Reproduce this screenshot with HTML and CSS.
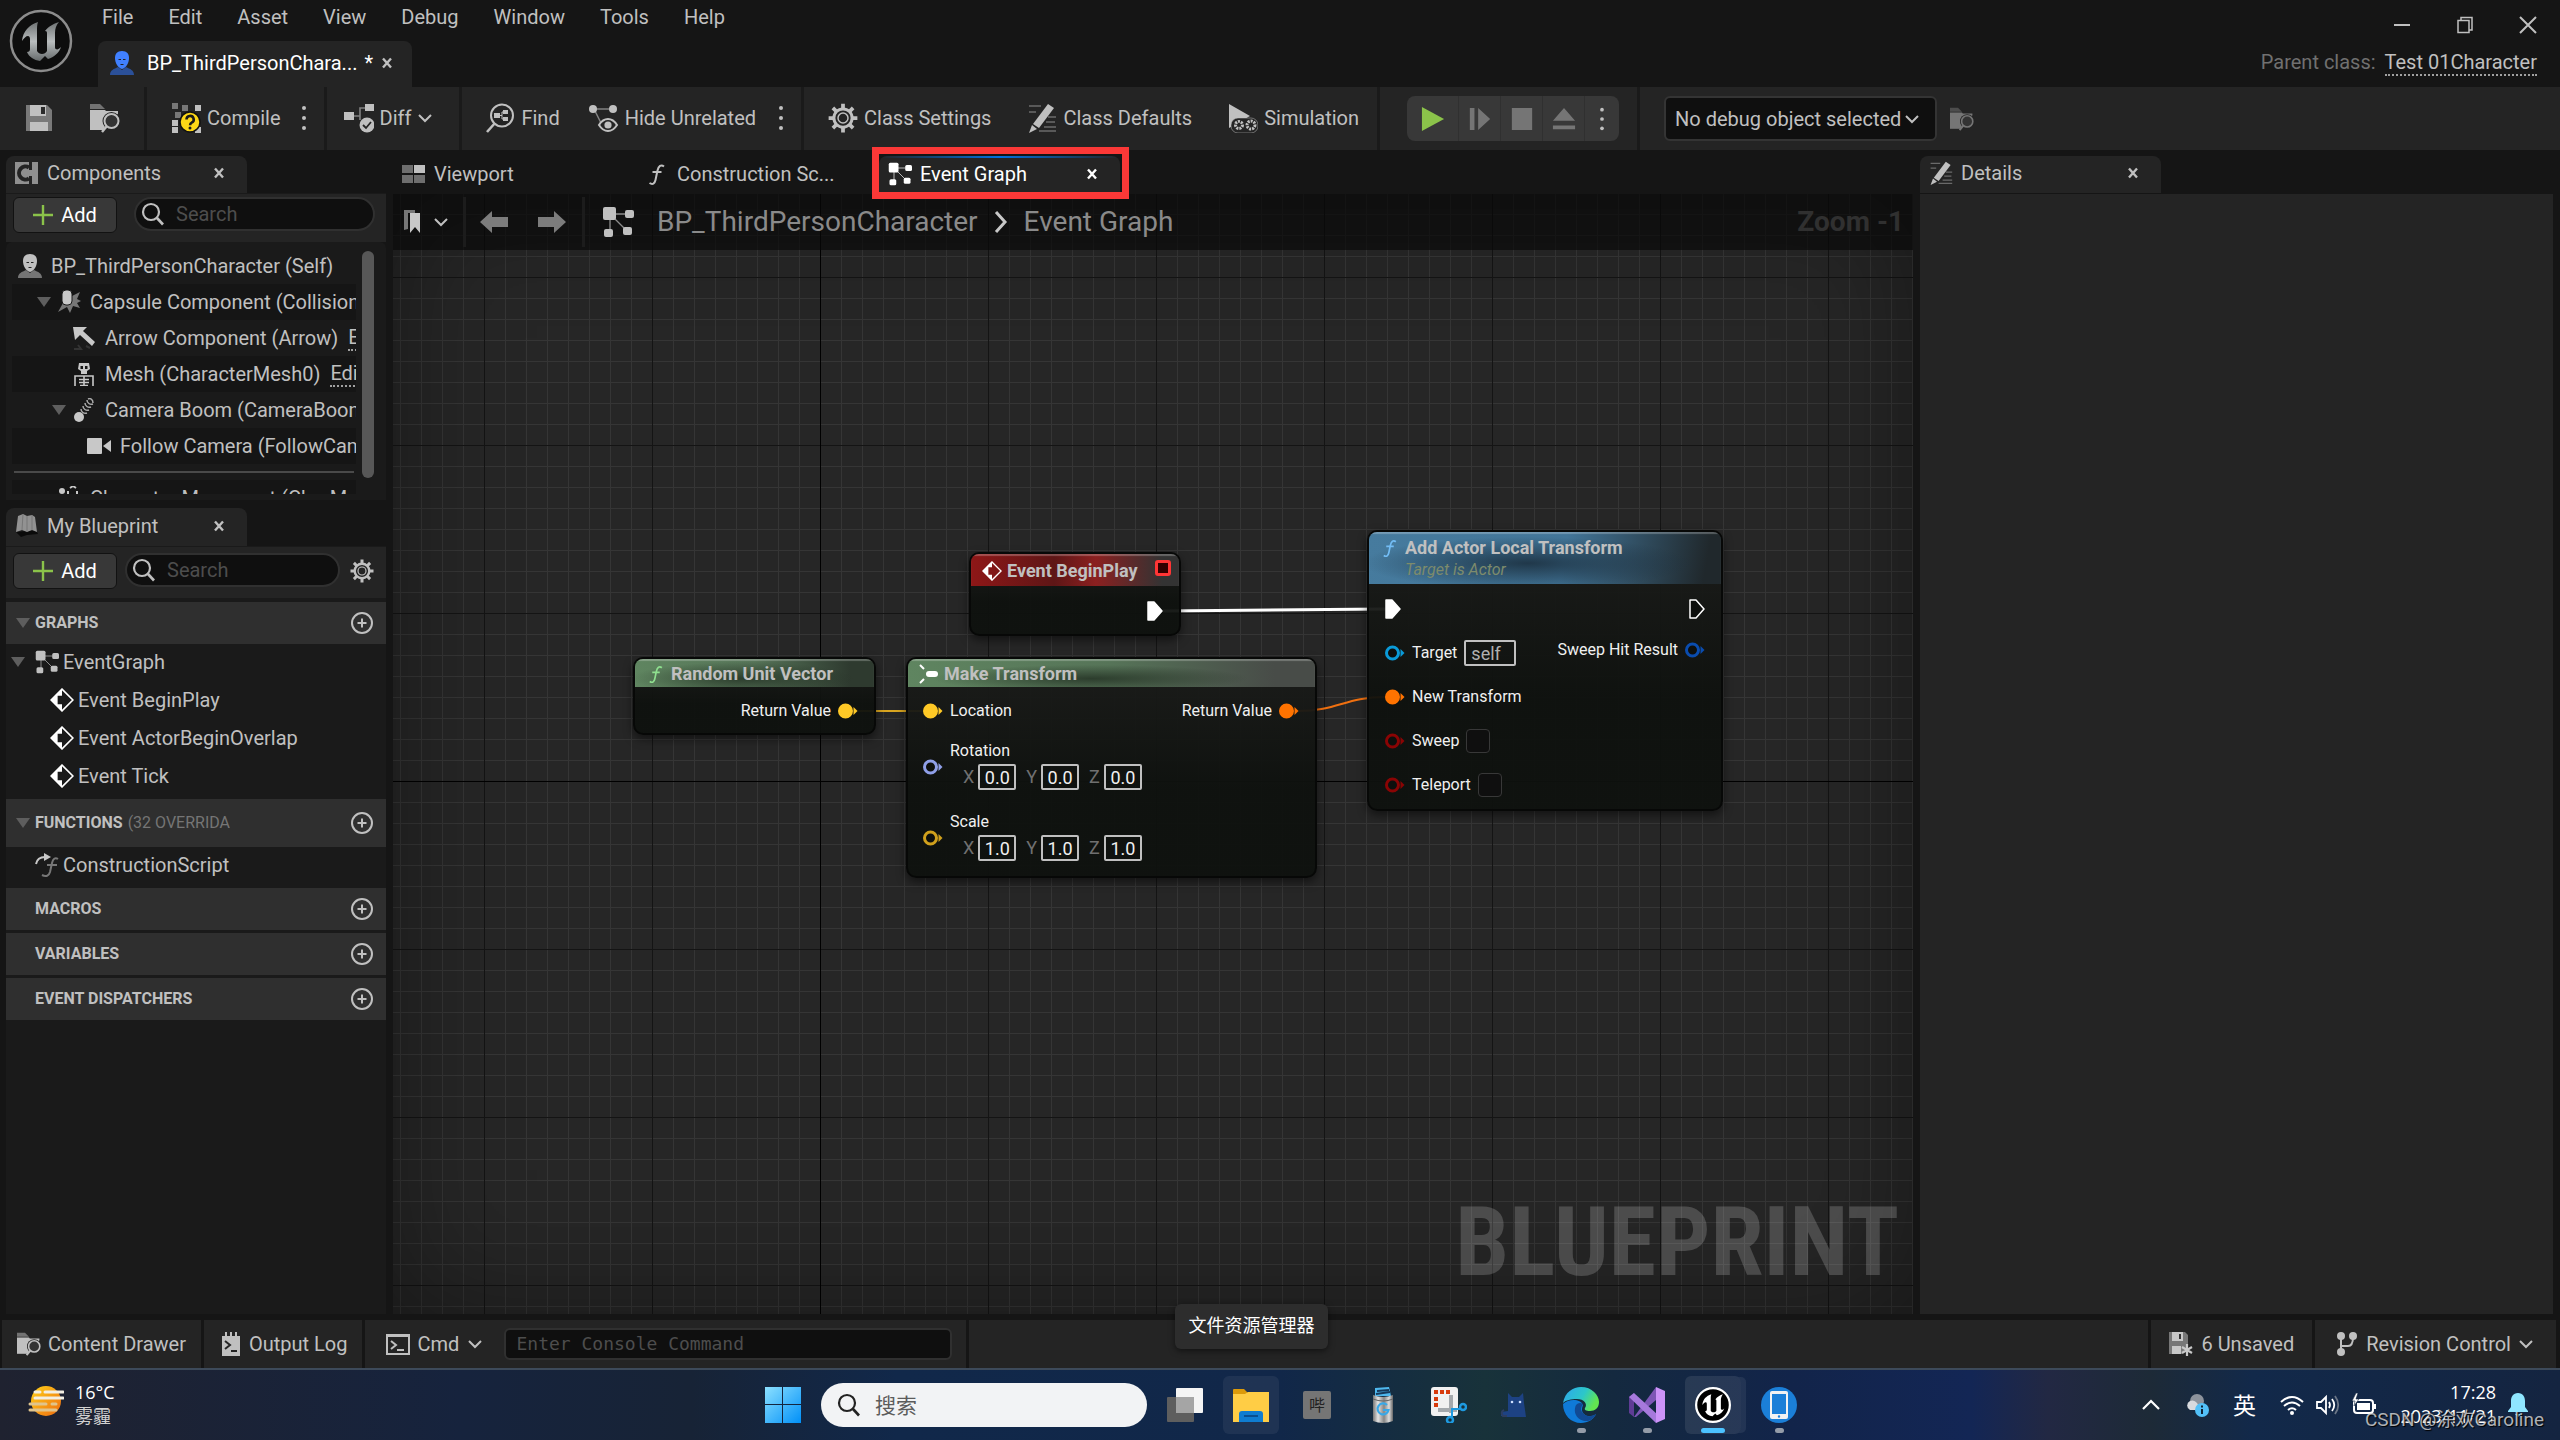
FILE: index.html
```html
<!DOCTYPE html>
<html lang="en">
<head>
  <meta charset="UTF-8">
  <meta name="viewport" content="width=device-width, initial-scale=1.0">
  <title>BP_ThirdPersonCharacter</title>
  <link rel="stylesheet" href="styles.css">
</head>
<body>

  <!-- icon sprite -->
  <svg class="sprite" xmlns="http://www.w3.org/2000/svg">
    <symbol id="i-close" viewBox="0 0 12 12"><path d="M2 1.5l8 9M10 1.5l-8 9" stroke="currentColor" stroke-width="2.4" fill="none"/></symbol>
    <symbol id="i-chevron" viewBox="0 0 16 16"><path d="M2 5l6 6 6-6" stroke="currentColor" stroke-width="2" fill="none"/></symbol>
    <symbol id="i-plus" viewBox="0 0 20 20"><path d="M10 0v20M0 10h20" stroke="currentColor" stroke-width="2.4"/></symbol>
    <symbol id="i-search" viewBox="0 0 24 24"><circle cx="10" cy="10" r="8" fill="none" stroke="currentColor" stroke-width="2.2"/><path d="M16 16l6 6.500" stroke="currentColor" stroke-width="2.6"/></symbol>
    <symbol id="i-add" viewBox="0 0 24 24"><circle cx="12" cy="12" r="10" fill="none" stroke="currentColor" stroke-width="2"/><path d="M12 7.500v9M7.500 12h9" stroke="currentColor" stroke-width="2"/></symbol>
    <symbol id="i-dots" viewBox="0 0 4 28"><circle cx="2" cy="4" r="2" fill="currentColor"/><circle cx="2" cy="14" r="2" fill="currentColor"/><circle cx="2" cy="24" r="2" fill="currentColor"/></symbol>
    <symbol id="i-tri" viewBox="0 0 16 10"><path d="M1 0h14L8 10z" fill="currentColor"/></symbol>
    <symbol id="i-gear" viewBox="0 0 24 24"><circle cx="12" cy="12" r="7.300" fill="none" stroke="currentColor" stroke-width="2.400"/><circle cx="12" cy="12" r="4" fill="none" stroke="currentColor" stroke-width="1.200"/><path d="M12 .5v4M12 19.500v4M.5 12h4M19.500 12h4M3.900 3.900l2.800 2.800M17.300 17.300l2.800 2.800M3.900 20.100l2.800-2.800M17.300 6.700l2.800-2.800" stroke="currentColor" stroke-width="3"/></symbol>
    <symbol id="i-save" viewBox="0 0 30 30"><path d="M2 2h21l5 5v21H2z" fill="currentColor" opacity=".55"/><path d="M6 2h16v11H6zM6 19h18v9H6z" fill="currentColor"/><path d="M17 4h4v7h-4z" fill="#2a2a2a"/></symbol>
    <symbol id="i-browse" viewBox="0 0 30 30"><path d="M0 1h10l5 5H0z" fill="currentColor" opacity=".5"/><path d="M0 7h15l1 1h12v19H0z" fill="currentColor"/><path d="M30 9v20H12l5-8z" fill="#242424"/><path d="M0 26h13" stroke="currentColor" stroke-width="2"/><circle cx="21.500" cy="18" r="9" fill="#242424"/><circle cx="21.500" cy="18" r="7" fill="#333" stroke="currentColor" stroke-width="2"/><path d="M17 23l-5 6" stroke="currentColor" stroke-width="2.400"/></symbol>
    <symbol id="i-compile" viewBox="0 0 30 30"><g fill="#c0c0c0"><path d="M1 17h6v6H1zM1 24h6v6H1zM24 2h6v6h-6zM24 24h6v6h-6z"/></g><path d="M1 0h6v6H1zM4 9h6v6H4zM11 2h6v6h-6z" fill="#777"/><circle cx="19" cy="19" r="10" fill="#fdd716" stroke="#111" stroke-width="1.500"/><path d="M15.500 16.500a3.600 3.600 0 1 1 5.200 3.200c-1.300.7-1.600 1.100-1.600 2.500" fill="none" stroke="#1a1a1a" stroke-width="2.600"/><circle cx="19" cy="25" r="1.500" fill="#1a1a1a"/></symbol>
    <symbol id="i-diff" viewBox="0 0 30 30"><path d="M0 9h10v8H0zM21 1h9v7h-9z" fill="currentColor"/><path d="M10 13h6V5h5M16 13v4" fill="none" stroke="currentColor" stroke-width="1.600" opacity=".6"/><circle cx="23" cy="22" r="7.500" fill="currentColor"/><path d="M19 22l3 3 5-6" fill="none" stroke="#242424" stroke-width="1.800"/></symbol>
    <symbol id="i-find" viewBox="0 0 30 30"><circle cx="17" cy="12.500" r="11" fill="none" stroke="currentColor" stroke-width="2"/><path d="M10 20l-8 9" stroke="currentColor" stroke-width="2.600"/><path d="M9 10h6v5H9zM18 7h5v4h-5zM18 14h5v4h-5z" fill="currentColor"/><path d="M15 12.500h2V9h2M17 12.500V16h2" fill="none" stroke="currentColor"/></symbol>
    <symbol id="i-hide" viewBox="0 0 30 30"><circle cx="4" cy="6" r="4" fill="currentColor"/><circle cx="24" cy="6" r="4" fill="currentColor"/><path d="M4 6h20M6 8l7 14" stroke="currentColor" stroke-width="1.500" opacity=".6"/><path d="M10 22c5-8 13-8 18 0-5 8-13 8-18 0z" fill="#242424" stroke="currentColor" stroke-width="2"/><circle cx="19" cy="22" r="3.600" fill="currentColor"/></symbol>
    <symbol id="i-pencil" viewBox="0 0 30 30"><path d="M2 3h12M2 9h7M21 14h8M19 19h9M17 24h12M12 28h17" stroke="currentColor" stroke-width="1.500" opacity=".45"/><path d="M21 1l6 4L12 25l-6-4z" fill="currentColor"/><path d="M5 22l5 4-8 4z" fill="currentColor"/></symbol>
    <symbol id="i-sim" viewBox="0 0 30 30"><path d="M1 1l21 12-21 12z" fill="currentColor"/><rect x="3" y="15" width="27" height="15" rx="7" fill="#242424" stroke="currentColor" stroke-opacity=".5"/><circle cx="11" cy="22" r="3.500" fill="none" stroke="currentColor" stroke-width="3" stroke-dasharray="2 1"/><circle cx="23" cy="22" r="4" fill="none" stroke="currentColor" stroke-width="3" stroke-dasharray="2 1"/></symbol>
    <symbol id="i-graph" viewBox="0 0 32 32"><path d="M8 8l18 18M8 8h18M8 8v20" fill="none" stroke="currentColor" stroke-width="1.300" opacity=".7"/><rect x="1" y="1" width="13" height="13" rx="2" fill="currentColor"/><rect x="23" y="4" width="9" height="8" rx="2" fill="currentColor"/><rect x="2" y="23" width="9" height="8" rx="2" fill="currentColor"/><rect x="21" y="21" width="9" height="8" rx="2" fill="currentColor"/></symbol>
    <symbol id="i-func" viewBox="0 0 24 24"><path d="M19 4.500c-3-2.500-5.500-.5-6.500 4L10.500 18c-.8 3.500-2.800 5-6 3M7.500 10h9" fill="none" stroke="currentColor" stroke-width="2"/></symbol>
    <symbol id="i-person" viewBox="0 0 24 24"><path d="M0 24c0-5 4-6 8-8l4 3 4-3c4 2 8 3 8 8z" fill="var(--coat, #757575)"/><path d="M12 0c5 0 7 3 7 7 0 5-3 10-7 11-4-1-7-6-7-11 0-4 2-7 7-7z" fill="var(--head, #c0c0c0)"/><path d="M8.500 8.500h2.500M13 8.500h2.500M10.500 13.500h3" stroke="#222" stroke-width="1"/></symbol>
    <symbol id="i-event" viewBox="0 0 22 22"><path d="M11 1l10 10-10 10L1 11z" fill="none" stroke="#fff" stroke-width="1.500"/><path d="M11 1v6H7v8h4v6L1 11z" fill="#fff"/></symbol>
    <symbol id="i-exec" viewBox="0 0 16 20"><path d="M1 1h6l8 9-8 9H1z" fill="var(--fill, #fff)" stroke="#fff" stroke-width="1.500" stroke-linejoin="round"/></symbol>
    <symbol id="i-pin" viewBox="0 0 20 16"><circle cx="7.500" cy="8" r="6" fill="var(--fill, currentColor)" stroke="currentColor" stroke-width="3"/><path d="M15.500 4l4 4-4 4z" fill="currentColor"/></symbol>
    <symbol id="i-term" viewBox="0 0 24 24"><path d="M1 3h22v19H1z" fill="none" stroke="currentColor" stroke-width="2"/><path d="M1 2h22v3H1z" fill="currentColor"/><path d="M5 9l5 4-5 4M11 18h7" fill="none" stroke="currentColor" stroke-width="2"/></symbol>
    <symbol id="i-ulogo" viewBox="0 0 64 64"><path d="M29 13C20 16 14 22 13 32c2-3 4-5 6-5 1 0 2 1 2 3v10c0 2-1 3-3 3 2 5 7 8 13 9l5-5 3 3c6-2 11-6 13-12-2 2-4 3-5 2-1 0-1-1-1-3V24c0-4 1-8 4-11-6 2-10 4-14 9 2 0 2 1 2 3v17c-1 2-3 3-5 3s-4-1-5-3V22c0-4 0-6 1-9z" fill="var(--logo, #fff)"/></symbol>
  </svg>

  <header class="titlebar">
    <svg class="logo" viewBox="0 0 64 64">
      <defs><linearGradient id="metal" x1="0" y1="0" x2="0" y2="1"><stop offset="0" stop-color="#6e7273"/><stop offset=".5" stop-color="#b9bdbe"/><stop offset="1" stop-color="#666b6c"/></linearGradient></defs>
      <circle cx="32" cy="32" r="30" fill="#0d0d0d" stroke="#8c8c8c" stroke-width="2.500"/>
      <use href="#i-ulogo"/>
    </svg>
    <div class="title-main">
      <nav class="menu">
        <button>File</button><button>Edit</button><button>Asset</button><button>View</button><button>Debug</button><button>Window</button><button>Tools</button><button>Help</button>
      </nav>
      <div class="asset-tab">
        <svg class="icon-24 blue-person"><use href="#i-person"/></svg>
        <span class="asset-name">BP_ThirdPersonChara...</span>
        <span>*</span>
        <button class="close" aria-label="Close"><svg><use href="#i-close"/></svg></button>
      </div>
    </div>
    <div class="title-right">
      <div class="window-buttons">
        <button aria-label="Minimize"><svg viewBox="0 0 18 18"><path d="M1 9h16" stroke="currentColor" stroke-width="2"/></svg></button>
        <button aria-label="Restore"><svg viewBox="0 0 18 18"><path d="M5 4V1.500h11V14h-2.500M2 4.500h11v12H2z" fill="none" stroke="currentColor" stroke-width="1.500"/></svg></button>
        <button aria-label="Close window"><svg viewBox="0 0 18 18"><path d="M1 1l16 16M17 1L1 17" stroke="currentColor" stroke-width="2"/></svg></button>
      </div>
      <div class="parent-class">Parent class: <a href="#">Test 01Character</a></div>
    </div>
  </header>

  <div class="toolbar">
    <div class="tool-group files">
      <button class="tool" aria-label="Save"><svg><use href="#i-save"/></svg></button>
      <button class="tool" aria-label="Browse"><svg><use href="#i-browse"/></svg></button>
    </div>
    <div class="tool-group compile">
      <button class="tool"><svg><use href="#i-compile"/></svg>Compile</button>
      <button class="dots" aria-label="Compile options"><svg><use href="#i-dots"/></svg></button>
    </div>
    <div class="tool-group diff">
      <button class="tool"><svg><use href="#i-diff"/></svg>Diff<svg class="icon-16"><use href="#i-chevron"/></svg></button>
    </div>
    <div class="tool-group find">
      <button class="tool"><svg><use href="#i-find"/></svg>Find</button>
      <button class="tool"><svg><use href="#i-hide"/></svg>Hide Unrelated</button>
      <button class="dots" aria-label="Hide options"><svg><use href="#i-dots"/></svg></button>
    </div>
    <div class="tool-group class-tools">
      <button class="tool"><svg><use href="#i-gear"/></svg>Class Settings</button>
      <button class="tool"><svg><use href="#i-pencil"/></svg>Class Defaults</button>
      <button class="tool"><svg><use href="#i-sim"/></svg>Simulation</button>
    </div>
    <div class="tool-group play-tools">
      <div class="play-bar">
        <button class="play" aria-label="Play"><svg viewBox="0 0 26 26"><path d="M1 0l24 13L1 26z" fill="currentColor"/></svg></button>
        <button aria-label="Step"><svg viewBox="0 0 26 26"><path d="M2 1h5v24H2zM11 1l13 12-13 12z" fill="currentColor"/></svg></button>
        <button aria-label="Stop"><svg viewBox="0 0 26 26"><path d="M2 1h22v24H2z" fill="currentColor"/></svg></button>
        <button aria-label="Eject"><svg viewBox="0 0 26 26"><path d="M13 1l12 14H1zM1 20h24v4H1z" fill="currentColor"/></svg></button>
        <button class="more" aria-label="Play options"><svg><use href="#i-dots"/></svg></button>
      </div>
    </div>
    <div class="tool-group debug">
      <div class="select-wrap debug-select">
        <select aria-label="Debug object"><option>No debug object selected</option></select>
        <svg class="icon-16"><use href="#i-chevron"/></svg>
      </div>
      <button class="small-browse" aria-label="Browse debug object"><svg><use href="#i-browse"/></svg></button>
    </div>
  </div>

  <main class="workspace">
    <aside class="side">
      <section class="dock components">
        <div class="tabs">
          <div class="tab active">
            <svg class="icon-24" viewBox="0 0 24 24"><path d="M0 1h14v22H0zM17 1h6v22h-6zM14 9h3v6h-3z" fill="#909090"/><path d="M14 6.500a6.500 6.500 0 1 0 0 11" fill="none" stroke="#242424" stroke-width="4"/></svg>
            <span>Components</span>
            <button class="close" aria-label="Close Components"><svg><use href="#i-close"/></svg></button>
          </div>
        </div>
        <div class="panel-tools">
          <button class="add"><svg><use href="#i-plus"/></svg>Add</button>
          <label class="search"><svg><use href="#i-search"/></svg><input type="text" placeholder="Search" aria-label="Search components"></label>
        </div>
        <div class="tree-wrap">
          <ul class="tree">
            <li class="d0"><svg class="icon-24"><use href="#i-person"/></svg><span>BP_ThirdPersonCharacter (Self)</span></li>
            <li class="d1"><svg class="tri"><use href="#i-tri"/></svg><svg class="icon-24" viewBox="0 0 24 24"><path d="M15 6l8-4-3 7 4 2-4 2 3 5-7-2-3 7-3-6-9 5 5-9z" fill="#777"/><rect x="5" y="0" width="10" height="15" rx="4" fill="#c8c8c8" stroke="#1a1a1a"/></svg><span>Capsule Component (CollisionCylinder)</span></li>
            <li class="d2"><svg class="icon-24" viewBox="0 0 24 24"><path d="M2 23h7l-3-4M14 20l4 2" stroke="#333" stroke-width="2" fill="none"/><path d="M1 1h14l-4 4 12 11-3 4L8 9l-5 5z" fill="#c8c8c8"/></svg><span>Arrow Component (Arrow)</span><a href="#">Edit in C++</a></li>
            <li class="d2"><svg class="icon-24" viewBox="0 0 24 24"><path d="M7 1h10l1 6-3 2v3H9V9L6 7z" fill="#c8c8c8"/><path d="M8.500 4h2.500v3H8.500zM13 4h2.500v3H13z" fill="#151515"/><path d="M3 24V14h18v10M12 14v10M7 17.500h10M7 20.500h10M8 23.500h8" stroke="#c8c8c8" stroke-width="1.600" fill="none"/></svg><span>Mesh (CharacterMesh0)</span><a href="#">Edit in C++</a></li>
            <li class="d2 open"><svg class="tri"><use href="#i-tri"/></svg><svg class="icon-24" viewBox="0 0 24 24"><circle cx="7" cy="19" r="5" fill="#c8c8c8"/><path d="M9 11c0 3 3 5 6 4M11 8c0 3 3 5 6 4M13 5c0 3 3 5 6 4M15 2c0 3 3 5 6 4M16 1c2-1 5 0 5 4" stroke="#aaa" stroke-width="1.500" fill="none"/></svg><span>Camera Boom (CameraBoom)</span></li>
            <li class="d3"><svg class="icon-24" viewBox="0 0 24 24"><rect x="0" y="4" width="15" height="16" rx="1" fill="#c8c8c8"/><path d="M24 6v12l-8-6z" fill="#c8c8c8"/></svg><span>Follow Camera (FollowCamera)</span></li>
            <li class="rule"></li>
            <li class="d1 last"><svg class="icon-24" viewBox="0 0 24 24"><circle cx="5" cy="5" r="3" fill="#c8c8c8"/><path d="M13 2l3-2 3 2M11 5v4M20 5v4" stroke="#c8c8c8" stroke-width="2" fill="none"/></svg><span>Character Movement (CharMoveComp)</span></li>
          </ul>
          <div class="scrollbar"></div>
        </div>
      </section>

      <section class="dock blueprint">
        <div class="tabs">
          <div class="tab active">
            <svg class="icon-24" viewBox="0 0 24 24"><path d="M1 18l5 5 6-2 11-1-2-4z" fill="#0a0a0a"/><path d="M3 2l5-2 4 2 5-1 3 2 2 15-5-2-5 2-5-2-6 2z" fill="#929292"/><path d="M8 0L7 16M12 2v16M17 1l0 15" stroke="#777"/></svg>
            <span>My Blueprint</span>
            <button class="close" aria-label="Close My Blueprint"><svg><use href="#i-close"/></svg></button>
          </div>
        </div>
        <div class="panel-tools">
          <button class="add"><svg><use href="#i-plus"/></svg>Add</button>
          <label class="search"><svg><use href="#i-search"/></svg><input type="text" placeholder="Search" aria-label="Search blueprint"></label>
          <button class="gear" aria-label="View options"><svg class="icon-24"><use href="#i-gear"/></svg></button>
        </div>
        <div class="sections">
          <div class="section-head"><svg class="tri"><use href="#i-tri"/></svg><b>GRAPHS</b><button aria-label="Add graph"><svg class="icon-24"><use href="#i-add"/></svg></button></div>
          <ul class="items events">
            <li class="top"><svg class="tri"><use href="#i-tri"/></svg><svg class="icon-24"><use href="#i-graph"/></svg>EventGraph</li>
            <li><svg class="icon-24"><use href="#i-event"/></svg>Event BeginPlay</li>
            <li><svg class="icon-24"><use href="#i-event"/></svg>Event ActorBeginOverlap</li>
            <li><svg class="icon-24"><use href="#i-event"/></svg>Event Tick</li>
          </ul>
          <div class="section-head tall"><svg class="tri"><use href="#i-tri"/></svg><b>FUNCTIONS</b><span class="count">(32 OVERRIDABLE)</span><button aria-label="Add function"><svg class="icon-24"><use href="#i-add"/></svg></button></div>
          <ul class="items">
            <li class="func"><svg class="icon-24" viewBox="0 0 24 24"><path d="M1 11c1-5 5-7 9-7" stroke="#c8c8c8" stroke-width="2" fill="none"/><path d="M9 0l7 4-7 4z" fill="#c8c8c8"/><path d="M23 6c-3-2-5 0-6 4l-2 9c-1 4-4 5-8 3M12 12h10" fill="none" stroke="#777" stroke-width="2"/></svg>ConstructionScript</li>
          </ul>
          <div class="section-head"><b>MACROS</b><button aria-label="Add macro"><svg class="icon-24"><use href="#i-add"/></svg></button></div>
          <div class="section-head"><b>VARIABLES</b><button aria-label="Add variable"><svg class="icon-24"><use href="#i-add"/></svg></button></div>
          <div class="section-head"><b>EVENT DISPATCHERS</b><button aria-label="Add dispatcher"><svg class="icon-24"><use href="#i-add"/></svg></button></div>
        </div>
      </section>
    </aside>

    <section class="dock center">
      <div class="tabs">
        <div class="tab"><svg class="icon-24" viewBox="0 0 24 24"><path d="M0 3h11v8H0zM0 13h11v8H0zM12 13h11v8H12z" fill="#6e6e6e"/><path d="M12 3h11v8H12z" fill="#c0c0c0"/></svg><span>Viewport</span></div>
        <div class="tab"><svg class="icon-24"><use href="#i-func"/></svg><span>Construction Sc...</span></div>
        <div class="tab active current"><svg class="icon-24"><use href="#i-graph"/></svg><span>Event Graph</span><button class="close" aria-label="Close Event Graph"><svg><use href="#i-close"/></svg></button></div>
      </div>
      <div class="graph">
        <div class="graph-head">
          <button class="bookmark" aria-label="Bookmarks"><svg class="icon-24" viewBox="0 0 24 24"><path d="M3 0h11v3H7v16l-4 1z" fill="#777"/><path d="M9 3h10v20l-5-6-5 6z" fill="#c8c8c8"/></svg><svg class="icon-16"><use href="#i-chevron"/></svg></button>
          <div class="nav-buttons">
            <button aria-label="Back"><svg viewBox="0 0 28 24"><path d="M0 12L12 1v6h16v10H12v6z" fill="#7c7c7c"/></svg></button>
            <button aria-label="Forward"><svg viewBox="0 0 28 24"><path d="M28 12L16 1v6H0v10h16v6z" fill="#7c7c7c"/></svg></button>
          </div>
          <svg class="crumb-icon"><use href="#i-graph"/></svg>
          <div class="crumbs"><span>BP_ThirdPersonCharacter</span><svg viewBox="0 0 14 24"><path d="M2 2l9 10-9 10" fill="none" stroke="#c8c8c8" stroke-width="3"/></svg><span>Event Graph</span></div>
          <div class="zoom">Zoom -1</div>
        </div>

        <svg class="wires">
          <path d="M770 417L992 415" stroke="#fff" stroke-width="3"/>
          <path d="M464 517H530" stroke="#d9a520" stroke-width="2"/>
          <path d="M905 517C945 517 952 503 992 503" stroke="#f07010" stroke-width="2"/>
        </svg>

        <div class="node begin-play">
          <div class="node-head red"><svg class="node-icon"><use href="#i-event"/></svg><b>Event BeginPlay</b><i class="delegate"></i></div>
          <div class="node-body"><div class="pins out"><div class="pin"><svg class="exec"><use href="#i-exec"/></svg></div></div></div>
        </div>

        <div class="node random">
          <div class="node-head green"><svg class="node-icon"><use href="#i-func"/></svg><b>Random Unit Vector</b></div>
          <div class="node-body"><div class="pins out"><div class="pin">Return Value<svg class="dot yellow"><use href="#i-pin"/></svg></div></div></div>
        </div>

        <div class="node make">
          <div class="node-head green wide"><svg class="node-icon" viewBox="0 0 20 20"><path d="M1 1l4 4M1 19l4-4" stroke="#fff" stroke-width="2"/><rect x="7" y="7" width="12" height="6" rx="3" fill="#fff"/></svg><b>Make Transform</b></div>
          <div class="node-body">
            <div class="pins">
              <div class="pin"><svg class="dot yellow"><use href="#i-pin"/></svg>Location</div>
              <div class="pin vector"><svg class="dot hollow lilac"><use href="#i-pin"/></svg>
                <div>Rotation
                  <div class="xyz"><label>X<input value="0.0"></label><label>Y<input value="0.0"></label><label>Z<input value="0.0"></label></div>
                </div>
              </div>
              <div class="pin vector"><svg class="dot hollow gold"><use href="#i-pin"/></svg>
                <div>Scale
                  <div class="xyz"><label>X<input value="1.0"></label><label>Y<input value="1.0"></label><label>Z<input value="1.0"></label></div>
                </div>
              </div>
            </div>
            <div class="pins out"><div class="pin">Return Value<svg class="dot orange"><use href="#i-pin"/></svg></div></div>
          </div>
        </div>

        <div class="node add-transform">
          <div class="node-head blue"><svg class="node-icon"><use href="#i-func"/></svg><div><b>Add Actor Local Transform</b><em>Target is Actor</em></div></div>
          <div class="node-body">
            <div class="pins">
              <div class="pin"><svg class="exec"><use href="#i-exec"/></svg></div>
              <div class="pin"><svg class="dot hollow cyan"><use href="#i-pin"/></svg><label for="target">Target</label><input id="target" class="self" value="self"></div>
              <div class="pin"><svg class="dot orange"><use href="#i-pin"/></svg>New Transform</div>
              <div class="pin"><svg class="dot hollow maroon"><use href="#i-pin"/></svg><label for="sweep">Sweep</label><input id="sweep" type="checkbox"></div>
              <div class="pin"><svg class="dot hollow maroon"><use href="#i-pin"/></svg><label for="teleport">Teleport</label><input id="teleport" type="checkbox"></div>
            </div>
            <div class="pins out">
              <div class="pin"><svg class="exec hollow"><use href="#i-exec"/></svg></div>
              <div class="pin">Sweep Hit Result<svg class="dot hollow navy"><use href="#i-pin"/></svg></div>
            </div>
          </div>
        </div>

        <div class="stamp">BLUEPRINT</div>
      </div>
    </section>

    <section class="dock details">
      <div class="tabs">
        <div class="tab active"><svg class="icon-24"><use href="#i-pencil"/></svg><span>Details</span><button class="close" aria-label="Close Details"><svg><use href="#i-close"/></svg></button></div>
      </div>
      <div class="details-body"></div>
    </section>
  </main>

  <footer class="statusbar">
    <button class="cell"><svg class="icon-24"><use href="#i-browse"/></svg>Content Drawer</button>
    <button class="cell output"><svg class="icon-24" viewBox="0 0 24 24"><path d="M3 4h3V0h2v4h3V0h2v4h3V0h2v4h3v20H3z" fill="#c0c0c0"/><path d="M6 9l5 4-5 4M12 19h6" fill="none" stroke="#242424" stroke-width="2"/></svg>Output Log</button>
    <div class="cell cmd">
      <svg class="icon-24"><use href="#i-term"/></svg>
      <div class="select-wrap cmd-select"><select aria-label="Console type"><option>Cmd</option></select><svg class="icon-16"><use href="#i-chevron"/></svg></div>
      <input class="console" type="text" placeholder="Enter Console Command" aria-label="Console command">
    </div>
    <div class="cell filler"></div>
    <button class="cell unsaved"><svg class="icon-24" viewBox="0 0 24 24"><path d="M0 0h16l3 3v10l-6 9H0z" fill="#777"/><path d="M3 0h11v9H3zM3 14h9v8H3z" fill="#c8c8c8"/><path d="M10 2h2v5h-2z" fill="#333"/><path d="M18 12v12M13 15l10 6M23 15l-10 6" stroke="#c8c8c8" stroke-width="2.200"/></svg>6 Unsaved</button>
    <button class="cell revision"><svg class="icon-24" viewBox="0 0 24 24"><path d="M6 4v16M6 14h7c4 0 5-3 5-9" fill="none" stroke="#c0c0c0" stroke-width="2"/><circle cx="6" cy="4" r="4" fill="#c0c0c0"/><circle cx="18" cy="4" r="4" fill="#c0c0c0"/><circle cx="6" cy="20" r="4" fill="#c0c0c0"/></svg>Revision Control<svg class="icon-16"><use href="#i-chevron"/></svg></button>
  </footer>

  <!-- Windows taskbar -->
  <div class="taskbar">
    <div class="weather">
      <svg viewBox="0 0 36 36"><defs><linearGradient id="sun" x1="0" y1="0" x2="1" y2="1"><stop offset="0" stop-color="#ffd21a"/><stop offset="1" stop-color="#ee6a10"/></linearGradient></defs><circle cx="18" cy="17" r="15" fill="url(#sun)"/><path d="M7 8h5M17 8h18M7 14h28" stroke="#f3eee2" stroke-width="3" stroke-linecap="round"/><path d="M2 20h16M24 20h4M2 26h26" stroke="#e0c48c" stroke-width="3" stroke-linecap="round"/></svg>
      <div>16°C<br><span>雾霾</span></div>
    </div>
    <div class="apps">
      <button class="app" aria-label="Start"><svg viewBox="0 0 36 36"><defs><linearGradient id="win" x1="0" y1="0" x2="1" y2="1"><stop offset="0" stop-color="#8ce0ff"/><stop offset="1" stop-color="#0090f8"/></linearGradient></defs><path d="M0 0h17v17H0zM18 0h18v17H18zM0 18h17v18H0zM18 18h18v18H18z" fill="url(#win)"/></svg></button>
      <label class="win-search"><svg class="icon-24"><use href="#i-search"/></svg><input type="text" placeholder="搜索" aria-label="搜索"></label>
      <button class="app" aria-label="Task view"><svg viewBox="0 0 36 36"><rect x="9" y="1" width="27" height="25" rx="1" fill="#f4f4f4"/><rect x="0" y="10" width="27" height="25" rx="1" fill="#5e5e5e"/><path d="M9 10h18v16H9z" fill="#a5a5a5"/></svg></button>
      <button class="app hot" aria-label="文件资源管理器"><svg viewBox="0 0 36 36"><path d="M0 3q0-1 1-1h10l4 4v5H0z" fill="#dc9a0a"/><path d="M0 7h12l3-2h21v30H0z" fill="#ffcd45"/><path d="M6 35V27q0-3 3-3h18q3 0 3 3v8z" fill="#0f7cd0"/><path d="M11 29h14" stroke="#0a4f90" stroke-width="2"/></svg></button>
      <button class="app" aria-label="哔"><span class="bi">哔</span></button>
      <button class="app" aria-label="Recycle bin"><svg viewBox="0 0 36 36"><defs><linearGradient id="can" x1="0" x2="1" y1="0" y2="0"><stop offset="0" stop-color="#777"/><stop offset=".25" stop-color="#e4e4e4"/><stop offset=".55" stop-color="#858585"/><stop offset=".8" stop-color="#dedede"/><stop offset="1" stop-color="#666"/></linearGradient></defs><path d="M10 1l14-1 2 9H10z" fill="#4fb8ee"/><path d="M12 4l12-1M11 7l14-2" stroke="#173a5c" stroke-width="2"/><path d="M8 8q10 4 20 0v26q-10 4-20 0z" fill="url(#can)"/><path d="M8 12q10 4 20 0" stroke="#666" fill="none"/><path d="M22 18a5.500 5.500 0 1 0 1.500 5H18" fill="none" stroke="#38a8e8" stroke-width="2.200"/></svg></button>
      <button class="app" aria-label="Snipping tool"><svg viewBox="0 0 36 36"><rect x="0" y="0" width="27" height="29" rx="3" fill="#f1f1f1"/><path d="M3 5h16M5 10v12" stroke="#d83b0c" stroke-width="4" stroke-dasharray="4 2" fill="none"/><path d="M20 8v18M7 23h19" stroke="#a4a9ad" stroke-width="4"/><circle cx="32" cy="20" r="3" fill="none" stroke="#1e9ae0" stroke-width="2.500"/><circle cx="19" cy="33" r="3" fill="none" stroke="#1e9ae0" stroke-width="2.500"/><path d="M21 30V22h9" stroke="#1e9ae0" stroke-width="2" fill="none"/></svg></button>
      <button class="app" aria-label="Cat"><svg viewBox="0 0 36 36"><path d="M11 6l4 4h7l4-4 1 10 2 14H10l-6-1v-4l7-1z" fill="#1d4283"/><path d="M10 29H6q-3-4 1-6" stroke="#2c3d60" stroke-width="2" fill="none"/><circle cx="15" cy="15" r="1.300" fill="#cfe0ff"/><circle cx="23" cy="15" r="1.300" fill="#cfe0ff"/></svg></button>
      <button class="app running" aria-label="Edge"><svg viewBox="0 0 36 36"><defs><linearGradient id="edge1" x1="0" x2="1" y1="0" y2=".4"><stop offset="0" stop-color="#2ea5ee"/><stop offset=".6" stop-color="#2cc7c9"/><stop offset="1" stop-color="#62e650"/></linearGradient></defs><path d="M0 17c0 11 8 19 18 19 7 0 13-4 15-9-4 3-9 3-12 0-3-3-2-6-1-9-2-6-14-7-20-1z" fill="#0f7ad8"/><path d="M0 16C2 5 10 0 18 0c11 0 18 8 18 15 0 6-4 9-9 9-4 0-6-1-5-3 3-4-1-9-8-9-6 0-11 1-14 4z" fill="url(#edge1)"/><path d="M13 18c-4 9 3 17 12 16 4-1 7-4 8-7-5 3-10 3-13-1-3-3-2-6 0-9-3-2-5-1-7 1z" fill="#114a94"/></svg></button>
      <button class="app running" aria-label="Visual Studio"><svg viewBox="0 0 36 36"><path d="M5 30L27 0v13L7 30z" fill="#7d56b5"/><path d="M0 10l5-4v24l-5-4z" fill="#5f3c95"/><path d="M0 10l5-4 24 22-2 8z" fill="#a679dc"/><path d="M27 0l9 4v28l-9 4z" fill="#cc93f8"/></svg></button>
      <button class="app running focused" aria-label="Unreal Editor"><svg viewBox="0 0 64 64"><circle cx="32" cy="32" r="30" fill="#000" stroke="#fff" stroke-width="4"/><use href="#i-ulogo"/></svg></button>
      <button class="app running" aria-label="Phone link"><svg viewBox="0 0 36 36"><circle cx="18" cy="18" r="18" fill="#1b7fd8"/><rect x="9" y="4" width="18" height="28" rx="2" fill="#f2f2f2"/><path d="M11 7h14v20H11z" fill="#1b7fd8"/><circle cx="18" cy="29.500" r="1.200" fill="#1b7fd8"/></svg></button>
    </div>
    <div class="tray">
      <svg class="icon-24" viewBox="0 0 24 24"><path d="M4 16l8-8 8 8" fill="none" stroke="#fff" stroke-width="2.200"/></svg>
      <svg class="icon-24 cloud" viewBox="0 0 24 24"><circle cx="12" cy="8" r="7" fill="#8d939c"/><path d="M5 8a6 6 0 0 1 7 2l4 7H5a5 5 0 0 1 0-9z" fill="#d8dade"/><circle cx="17" cy="17" r="7" fill="#52c0f8"/><path d="M17 16v5M17 12.500v2" stroke="#123" stroke-width="2"/></svg>
      <span class="ime">英</span>
      <svg class="icon-24" viewBox="0 0 24 24"><path d="M1 9q11-10 22 0M4 13q8-7 16 0M8 17q4-3.500 8 0" fill="none" stroke="#fff" stroke-width="2"/><circle cx="12" cy="20" r="2" fill="#fff"/></svg>
      <svg class="icon-24" viewBox="0 0 24 24"><path d="M1 9h4l5-5v16l-5-5H1z" fill="none" stroke="#fff" stroke-width="1.800"/><path d="M13 9q2 3 0 6M16 6q4.500 6 0 12" fill="none" stroke="#fff" stroke-width="1.800"/><path d="M19 3q6.500 9 0 18" fill="none" stroke="#6b7686" stroke-width="1.800"/></svg>
      <svg class="icon-24" viewBox="0 0 24 24"><rect x="2" y="7" width="19" height="13" rx="3" fill="none" stroke="#fff" stroke-width="2"/><path d="M5 10h13v7H5zM22 11h2v5h-2z" fill="#fff"/><path d="M4 0l-4 8h3l-1 5 5-7H4l2-6z" fill="#fff" stroke="#14263f" stroke-width=".6"/></svg>
      <div class="clock">17:28<br>2023/11/21</div>
      <svg class="bell" viewBox="0 0 20 24"><path d="M10 0c5 0 7 4 7 8v6l3 4v1H0v-1l3-4V8c0-4 2-8 7-8zM7 21h6l-3 3z" fill="#8fe6ff"/></svg>
    </div>
    <div class="tooltip">文件资源管理器</div>
    <div class="credit">CSDN @涂欢Caroline</div>
  </div>

</body>
</html>
```
FILE: styles.css
```css
* {
  box-sizing: border-box;
}

body {
  margin: 0;
  min-height: 100vh;
  display: flex;
  flex-direction: column;
  background: #151515;
  color: #c0c0c0;
  font-family: Roboto, "Noto Sans CJK SC", sans-serif;
  font-size: 20px;
  line-height: 24px;
}

button, input, select {
  font: inherit;
  color: inherit;
  background: none;
  border: 0;
  padding: 0;
  margin: 0;
}

button {
  display: flex;
  align-items: center;
}

input, select {
  outline: none;
  min-width: 0;
}

svg {
  display: block;
  flex: none;
}

ul {
  list-style: none;
  margin: 0;
  padding: 0;
}

.sprite {
  position: absolute;
  width: 0;
  height: 0;
}

.icon-24 { width: 24px; height: 24px; }
.icon-16 { width: 16px; height: 16px; }

.tri {
  width: 16px;
  height: 10px;
  color: #5e5e5e;
}

.close svg {
  width: 12px;
  height: 12px;
}

/* Title bar */
.titlebar {
  display: flex;
  height: 87px;
}

.logo {
  --logo: url(#metal);
  width: 64px;
  height: 64px;
  margin: 9px 16px 0 9px;
}

.title-main {
  margin-left: 9px;
  flex: 1;
}

.menu {
  display: flex;
  height: 41px;
  padding: 5px 0 12px 4px;
  gap: 35px;
}

.asset-tab {
  display: flex;
  align-items: center;
  width: 314px;
  height: 46px;
  padding: 0 12px 2px;
  border-radius: 8px 8px 0 0;
  background: #242424;
  color: #fff;
}

.asset-name {
  margin: 0 7px 0 13px;
}

.asset-tab .close {
  color: #c0c0c0;
  margin-left: 8px;
}

.blue-person {
  --head: #4080ff;
  --coat: #2b5099;
}

.title-right {
  display: flex;
  flex-direction: column;
  align-items: flex-end;
  padding: 16px 23px 0 0;
}

.window-buttons {
  display: flex;
  gap: 45px;
}

.window-buttons svg {
  width: 18px;
  height: 18px;
}

.parent-class {
  margin-top: 16px;
  color: #707070;
}

.parent-class a {
  margin-left: 4px;
}

a {
  color: #c0c0c0;
  text-decoration: none;
  border-bottom: 2px dotted #a0a0a0;
}

/* Main toolbar */
.toolbar {
  display: flex;
  height: 63px;
  background: #242424;
}

.tool-group {
  display: flex;
  align-items: center;
  gap: 36px;
  padding: 0 18px 2px 24px;
  border-right: 3px solid #1a1a1a;
}

.tool {
  gap: 6px;
  white-space: nowrap;
}

.tool svg {
  width: 30px;
  height: 30px;
}

.tool .icon-16 {
  width: 16px;
  height: 16px;
}

.dots svg {
  width: 4px;
  height: 28px;
}

.files { padding-right: 24px; }
.compile { gap: 21px; }
.diff { padding: 0 26px 2px 17px; }
.find { gap: 29px; padding-left: 23px; }
.find .dots { margin-left: -6px; }
.play-tools { padding: 0 18px 0 27px; }
.debug { gap: 12px; border: 0; padding-bottom: 0; }

.play-bar {
  display: flex;
  height: 45px;
  border-radius: 8px;
  overflow: hidden;
  background: #383838;
}

.play-bar button {
  width: 42px;
  justify-content: center;
  color: #757575;
  border-right: 1px solid #303030;
}

.play-bar svg {
  width: 24px;
  height: 26px;
}

.play-bar .play {
  width: 52px;
  color: #8bc34a;
}

.play-bar .more {
  width: 34px;
  color: #c0c0c0;
  border: 0;
}

.select-wrap {
  position: relative;
  display: flex;
  align-items: center;
}

.select-wrap select {
  appearance: none;
}

.select-wrap svg {
  position: absolute;
  right: 17px;
  pointer-events: none;
}

.debug-select select {
  height: 45px;
  width: 273px;
  padding: 0 32px 0 9px;
  background: #0f0f0f;
  border: 2px solid #343434;
  border-radius: 6px;
}

.small-browse {
  color: #757575;
}

.small-browse svg {
  width: 26px;
  height: 24px;
}

/* Docked panels */
.workspace {
  flex: 1;
  display: grid;
  grid-template-columns: 380px minmax(0, 1fr) 633px;
  gap: 7px;
  padding: 6px 7px 6px 6px;
}

.side {
  display: flex;
  flex-direction: column;
  gap: 8px;
  min-width: 0;
}

.dock {
  display: flex;
  flex-direction: column;
  min-width: 0;
}

.tabs {
  display: flex;
  gap: 2px;
  height: 38px;
}

.tab {
  position: relative;
  display: flex;
  align-items: center;
  gap: 8px;
  width: 241px;
  padding: 0 22px 3px 9px;
  border-radius: 8px 8px 0 0;
}

.tab.active {
  background: #242424;
}

.tab .close {
  margin-left: auto;
}

.tab.current {
  color: #fff;
  background: linear-gradient(90deg, #242424, #0070e0, #242424) top / 100% 2px no-repeat #242424;
}

/* highlight frame round the current tab */
.tab.current::after {
  content: "";
  position: absolute;
  z-index: 2;
  inset: -9px -9px -5px -7px;
  border: 7px solid #fb3837;
}

.components {
  height: 344px;
}

.components .tabs {
  height: 37px;
}

.panel-tools {
  display: flex;
  align-items: flex-start;
  gap: 17px;
  padding: 3px 11px 9px 7px;
  background: #242424;
  border-top: 1px solid #1a1a1a;
}

.add {
  flex: none;
  width: 104px;
  height: 36px;
  justify-content: center;
  gap: 8px;
  color: #fff;
  background: #383838;
  border: 1px solid #121212;
  border-radius: 6px;
}

.add svg {
  width: 20px;
  height: 20px;
  color: #8bc34a;
}

.search {
  display: flex;
  flex: 1;
  align-items: center;
  gap: 11px;
  height: 34px;
  min-width: 0;
  padding: 0 8px 0 5px;
  background: #0f0f0f;
  border: 2px solid #303030;
  border-radius: 17px;
}

.search svg {
  width: 24px;
  height: 24px;
}

.search input {
  width: 100%;
}

::placeholder {
  color: #4d4d4d;
  opacity: 1;
}

.tree-wrap {
  flex: 1;
  display: flex;
  gap: 6px;
  min-height: 0;
  padding: 6px 12px 6px 6px;
  background: #1a1a1a;
  border-radius: 6px 6px 0 0;
}

.tree {
  flex: 1;
  min-width: 0;
  overflow: hidden;
}

.tree li {
  display: flex;
  align-items: center;
  height: 36px;
  white-space: nowrap;
}

.tree li:nth-child(even) {
  background: #151515;
}

.tree span {
  margin-left: 9px;
}

.tree a {
  margin-left: 10px;
}

.tree .d0 { padding-left: 6px; }
.tree .d1 { padding-left: 24px; }
.tree .d1 .icon-24 { margin-left: 5px; }
.tree .d2 { padding-left: 60px; }
.tree .d2.open { padding-left: 39px; }
.tree .d2.open .icon-24 { margin-left: 5px; }
.tree .d3 { padding-left: 75px; }
.tree .d1.last { padding-left: 40px; }

.tree .rule {
  height: 2px;
  margin: 7px 2px 7px;
  background: #4a4a4a;
}

.scrollbar {
  width: 12px;
  height: 227px;
  margin-top: 3px;
  border-radius: 6px;
  background: #575757;
}

.blueprint {
  flex: 1;
}

.blueprint .panel-tools {
  gap: 8px;
  padding: 6px 12px 9px 7px;
}

.gear {
  height: 36px;
  margin-left: 2px;
}

.sections {
  flex: 1;
  padding-top: 4px;
  background: #1a1a1a;
}

.section-head {
  display: flex;
  align-items: center;
  height: 42px;
  padding: 0 12px 0 29px;
  background: #2f2f2f;
  font-size: 16px;
}

.section-head + .section-head {
  margin-top: 3px;
}

.section-head.tall {
  height: 48px;
}

.section-head .tri {
  margin: 0 4px 0 -20px;
}

.section-head button {
  margin-left: auto;
}

.count {
  width: 102px;
  margin-left: 5px;
  color: #757575;
  overflow: hidden;
  white-space: nowrap;
}

.items li {
  display: flex;
  align-items: center;
  gap: 4px;
  height: 38px;
  padding: 0 0 2px 44px;
}

.events {
  height: 155px;
}

.items .top {
  padding-left: 4px;
  gap: 4px;
}

.items .top .tri {
  margin-right: 5px;
}

.items .func {
  height: 41px;
  padding: 0 0 5px 29px;
}

/* Graph canvas */
.graph {
  position: relative;
  flex: 1;
  overflow: hidden;
  background-color: #262626;
  background-image:
    linear-gradient(#000, #000),
    linear-gradient(#000, #000),
    linear-gradient(90deg, #141414 1px, transparent 1px),
    linear-gradient(#141414 1px, transparent 1px),
    linear-gradient(90deg, #353535 1px, transparent 1px),
    linear-gradient(#353535 1px, transparent 1px);
  background-size: 1px 100%, 100% 1px, 168px 168px, 168px 168px, 21px 21px, 21px 21px;
  background-position: 427px 0, 0 587px, 91px 0, 0 83px, 7px 0, 0 20px;
  background-repeat: no-repeat, no-repeat, repeat, repeat, repeat, repeat;
}

.graph::before {
  content: "";
  position: absolute;
  inset: 0;
  box-shadow: inset 0 0 120px rgba(0, 0, 0, 0.4);
}

.graph-head {
  position: relative;
  display: flex;
  align-items: center;
  height: 56px;
  padding: 0 9px 0 8px;
  background: rgba(8, 8, 8, 0.65);
  color: #8a8a8a;
  font-size: 28px;
  line-height: 32px;
}

.bookmark {
  gap: 8px;
  color: #c0c0c0;
}

.nav-buttons {
  display: flex;
  gap: 30px;
  height: 50px;
  margin: 0 16px 0 14px;
  padding: 0 16px 0 14px;
  border: solid #1c1c1c;
  border-width: 0 3px;
}

.nav-buttons svg {
  width: 28px;
  height: 24px;
}

.crumb-icon {
  width: 34px;
  height: 32px;
  color: #c0c0c0;
}

.crumbs {
  display: flex;
  align-items: center;
  gap: 16px;
  margin-left: 22px;
}

.crumbs svg {
  width: 14px;
  height: 24px;
}

.zoom {
  margin-left: auto;
  font-weight: bold;
  color: #303030;
}

.wires {
  position: absolute;
  inset: 0;
  width: 100%;
  height: 100%;
  fill: none;
}

.node {
  position: absolute;
  border: 2px solid #070807;
  border-radius: 10px;
  overflow: hidden;
  background: linear-gradient(rgba(27, 28, 26, 0.95), rgba(14, 17, 14, 0.95) 60%);
  box-shadow: 0 4px 10px rgba(0, 0, 0, 0.5);
  color: #f0f0f0;
  font-size: 16px;
}

.begin-play { left: 576px; top: 358px; width: 212px; height: 84px; }
.random { left: 240px; top: 463px; width: 243px; height: 78px; }
.make { left: 513px; top: 463px; width: 411px; height: 221px; }
.add-transform { left: 974px; top: 336px; width: 356px; height: 281px; }

.node-head {
  display: flex;
  align-items: center;
  gap: 5px;
  height: 28px;
  padding: 2px 12px 0 11px;
  color: #c0c0c0;
  font-size: 18px;
  line-height: 22px;
  box-shadow: inset 0 2px 1px rgba(255, 255, 255, 0.25);
}

.node-icon {
  width: 20px;
  height: 20px;
}

.red {
  height: 32px;
  background: linear-gradient(90deg, #8e1717, #5e1616 40%, #8b2020 60%, #333 92%);
}

.green {
  background: radial-gradient(ellipse at 45% 70%, rgba(30, 42, 30, 0.75), transparent 60%), linear-gradient(90deg, #5f8560, #567458 50%, #2e3a2f 90%);
}

.green .node-icon {
  color: #8fe08f;
}

.green.wide {
  background: radial-gradient(ellipse at 45% 70%, rgba(30, 42, 30, 0.75), transparent 50%), linear-gradient(90deg, #5f8560, #567458 50%, #484c48 90%);
}

.blue {
  height: 52px;
  background: radial-gradient(ellipse at 45% 60%, rgba(26, 45, 60, 0.85), transparent 60%), linear-gradient(100deg, #467b9e, #427598 55%, #20282c 95%);
}

.blue .node-icon {
  color: #73bdf5;
  align-self: flex-start;
  margin-top: 4px;
}

.blue em {
  display: block;
  color: #7d8b6c;
  font-size: 16px;
}

.delegate {
  width: 16px;
  height: 16px;
  margin: 0 -4px 6px auto;
  border: 3px solid #ff3535;
  border-radius: 3px;
  background: #300;
}

.node-body {
  display: flex;
  justify-content: space-between;
  padding: 12px 16px 10px 15px;
}

.pins {
  display: flex;
  flex-direction: column;
  gap: 16px;
}

.out {
  align-items: flex-end;
  margin-left: auto;
}

.pin {
  display: flex;
  align-items: center;
  gap: 7px;
  height: 24px;
}

.add-transform .pins { gap: 18px; }
.add-transform .out { gap: 15px; }
.add-transform .pin { height: 26px; }

.add-transform .node-body {
  padding-left: 16px;
}

.begin-play .pin {
  height: 26px;
}

.exec {
  width: 16px;
  height: 20px;
}

.dot {
  width: 20px;
  height: 16px;
}

.hollow { --fill: #0d0f0d; }
.yellow { color: #ffc926; }
.orange { color: #ff7300; }
.lilac { color: #8f9fe8; }
.gold { color: #d0a01c; }
.cyan { color: #0a9ad8; }
.maroon { color: #8a0404; }
.navy { color: #0a4cae; }

.pin.vector {
  height: 55px;
}

.xyz {
  display: flex;
  gap: 10px;
  height: 31px;
  padding-left: 13px;
}

.xyz label {
  display: flex;
  align-items: center;
  gap: 4px;
  height: 28px;
  color: #707070;
  font-size: 18px;
}

.xyz input, .self {
  width: 38px;
  height: 26px;
  color: #f0f0f0;
  font-size: 18px;
  text-align: center;
  border: 2px solid #c0c0c0;
  border-radius: 2px;
}

.pin .self {
  width: 52px;
  padding-left: 5px;
  color: #b0b0b0;
  text-align: left;
}

.pin input[type="checkbox"] {
  appearance: none;
  width: 24px;
  height: 24px;
  background: #0f0f0f;
  border: 1px solid #383838;
  border-radius: 4px;
}

.stamp {
  position: absolute;
  right: 14px;
  bottom: 14px;
  font-family: "Roboto Condensed", "Liberation Sans Narrow", Roboto, sans-serif;
  font-size: 96px;
  line-height: 116px;
  font-weight: bold;
  color: rgba(255, 255, 255, 0.18);
}

.details .tabs {
  height: 37px;
}

.details-body {
  flex: 1;
  margin-top: 1px;
  background: #242424;
}

/* Status bar */
.statusbar {
  display: flex;
  gap: 3px;
  height: 48px;
  padding: 0 4px 0 2px;
}

.cell {
  display: flex;
  align-items: center;
  gap: 7px;
  padding: 0 15px;
  background: #242424;
  white-space: nowrap;
}

.cell.cmd {
  padding: 0 14px 0 21px;
}

.output {
  gap: 6px;
}

.cmd-select select {
  width: 66px;
}

.cmd-select svg {
  right: 0;
}

.console {
  width: 448px;
  height: 32px;
  margin-left: 14px;
  padding: 0 10px 2px;
  background: #0f0f0f;
  border: 2px solid #303030;
  border-radius: 6px;
  font-family: "DejaVu Sans Mono", monospace;
  font-size: 18px;
}

.filler {
  flex: 1;
}

.cell.unsaved {
  gap: 8px;
  padding: 0 18px;
}

.cell.revision {
  padding: 0 22px 0 20px;
}

/* Taskbar */
.taskbar {
  position: relative;
  display: grid;
  grid-template-columns: 1fr auto 1fr;
  align-items: center;
  height: 72px;
  border-top: 2px solid #3d4a5a;
  background: linear-gradient(90deg, #1f2230 0, #16233d 18%, #172336 27%, #11284a 35%, #112749 50%, #18323a 58%, #14293f 63%, #12244a 70%, #132655 77%, #222843 80%, #1d2a37 84%, #12294a 88%, #142440 100%);
  color: #fff;
  font-family: "Open Sans", "Noto Sans CJK SC", sans-serif;
  font-size: 18px;
}

.weather {
  display: flex;
  gap: 11px;
  padding: 0 0 2px 28px;
}

.weather svg {
  width: 36px;
  height: 36px;
  margin-top: 4px;
}

.weather span {
  color: #d0d0d0;
}

.apps {
  display: flex;
  align-items: center;
  gap: 10px;
  margin-left: 2px;
}

.app {
  position: relative;
  width: 56px;
  height: 58px;
  justify-content: center;
  border-radius: 6px;
}

.app svg {
  width: 36px;
  height: 36px;
}

.app.hot {
  background: rgba(255, 255, 255, 0.06);
}

.app.running::after {
  content: "";
  position: absolute;
  bottom: 1px;
  width: 9px;
  height: 5px;
  border-radius: 3px;
  background: #949ca8;
}

.app.focused {
  background: rgba(255, 255, 255, 0.09);
  box-shadow: 6px 0 0 -1px rgba(255, 255, 255, 0.07);
}

.app.focused::after {
  width: 24px;
  background: #4cc2ff;
}

.bi {
  width: 28px;
  border-radius: 2px;
  background: #757575;
  color: #222;
  font-size: 16px;
  line-height: 28px;
  text-align: center;
}

.win-search {
  display: flex;
  align-items: center;
  gap: 14px;
  width: 326px;
  height: 44px;
  padding: 0 16px;
  border-radius: 22px;
  background: #f2f3f5;
  color: #222;
}

.win-search input {
  width: 240px;
  font-size: 21px;
}

.win-search ::placeholder {
  color: #5c5c5c;
}

.tray {
  display: flex;
  align-items: center;
  justify-content: flex-end;
  gap: 12px;
  padding-right: 32px;
}

.cloud {
  margin: 0 12px 0 10px;
}

.ime {
  margin-right: 12px;
  font-size: 23px;
}

.clock {
  width: 108px;
  padding-bottom: 2px;
  text-align: right;
}

.bell {
  width: 20px;
  height: 24px;
}

.tooltip {
  position: absolute;
  left: 50%;
  top: -66px;
  margin-left: -105px;
  width: 153px;
  height: 45px;
  border-radius: 6px;
  background: #2d2d2d;
  box-shadow: 0 2px 6px rgba(0, 0, 0, 0.5);
  line-height: 42px;
  text-align: center;
}

.credit {
  position: absolute;
  right: 16px;
  bottom: 8px;
  color: rgba(230, 230, 230, 0.75);
  font-family: Roboto, "Noto Sans CJK SC", sans-serif;
  font-size: 19px;
  text-shadow: 1px 1px 1px #000;
}
```
